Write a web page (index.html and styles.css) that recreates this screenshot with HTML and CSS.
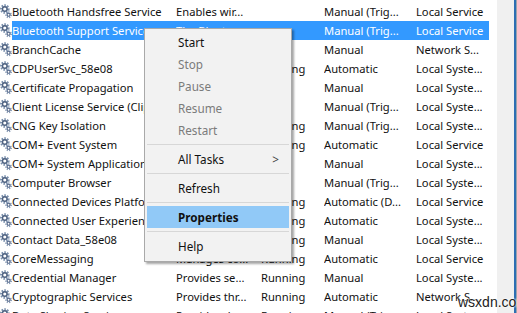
FILE: index.html
```html
<!DOCTYPE html>
<html lang="en">
<head>
  <meta charset="UTF-8" />
  <title>Services</title>
  <link rel="stylesheet" href="styles.css">
</head>
<body>

<svg width="0" height="0" class="defs">
  <symbol id="gear" viewBox="0 0 12 19">
    <circle cx="4.8" cy="7" r="3.3" fill="none" stroke="#7a90ad" stroke-width="3" stroke-dasharray="1.4 1.05"/>
    <circle cx="4.8" cy="7" r="2.3" fill="none" stroke="#4f6280" stroke-width="1.4"/>
    <circle cx="8.6" cy="12.8" r="2.3" fill="none" stroke="#8a9db8" stroke-width="2.3" stroke-dasharray="1 .9"/>
    <circle cx="8.6" cy="12.8" r="1.5" fill="none" stroke="#56698a" stroke-width="1.1"/>
  </symbol>
</svg>

<div class="window">
  <div class="list" id="list"></div>
  <div class="scroll"></div>

  <!-- context menu -->
  <div class="menu">
    <div class="item">Start</div>
    <div class="item off">Stop</div>
    <div class="item off">Pause</div>
    <div class="item off">Resume</div>
    <div class="item off">Restart</div>
    <div class="sep"></div>
    <div class="item sub">All Tasks <span class="arrow">&gt;</span></div>
    <div class="sep"></div>
    <div class="item">Refresh</div>
    <div class="sep"></div>
    <div class="item hot">Properties</div>
    <div class="sep"></div>
    <div class="item">Help</div>
  </div>

  <div class="mark">wsxdn.com</div>
</div>

<script>
  const services = [
    ["Bluetooth Handsfree Service", "Enables wir...", "", "Manual (Trig...", "Local Service"],
    ["Bluetooth Support Service", "The Bluetoo...", "", "Manual (Trig...", "Local Service", true],
    ["BranchCache", "This service ...", "", "Manual", "Network S..."],
    ["CDPUserSvc_58e08", "<Failed to R...", "Running", "Automatic", "Local Syste..."],
    ["Certificate Propagation", "Copies user ...", "", "Manual", "Local Syste..."],
    ["Client License Service (ClipSVC)", "Provides inf...", "", "Manual (Trig...", "Local Syste..."],
    ["CNG Key Isolation", "The CNG ke...", "Running", "Manual (Trig...", "Local Syste..."],
    ["COM+ Event System", "Supports Sy...", "Running", "Automatic", "Local Service"],
    ["COM+ System Application", "Manages th...", "", "Manual", "Local Syste..."],
    ["Computer Browser", "Maintains a...", "", "Manual (Trig...", "Local Syste..."],
    ["Connected Devices Platform Service", "This service ...", "Running", "Automatic (D...", "Local Service"],
    ["Connected User Experiences", "The Connec...", "Running", "Automatic", "Local Syste..."],
    ["Contact Data_58e08", "Indexes con...", "Running", "Manual", "Local Syste..."],
    ["CoreMessaging", "Manages co...", "Running", "Automatic", "Local Service"],
    ["Credential Manager", "Provides se...", "Running", "Manual", "Local Syste..."],
    ["Cryptographic Services", "Provides thr...", "Running", "Automatic", "Network S..."],
    ["Data Sharing Service", "Provides da...", "Running", "Manual (Trig...", "Local Syste..."]
  ];

  const list = document.getElementById('list');
  services.forEach(s => {
    const row = document.createElement('div');
    row.className = 'row' + (s[5] ? ' sel' : '');
    row.innerHTML = `<span class="ic"><svg width="12" height="19"><use href="#gear"/></svg></span>` +
      s.slice(0, 5).map(t => `<span class="cell">${t.replace(/</g, '&lt;')}</span>`).join('');
    list.appendChild(row);
  });
</script>
</body>
</html>
```

FILE: styles.css
```css
* {
  box-sizing: border-box;
  margin: 0;
  padding: 0;
}

body {
  font-family: 'Noto Sans', 'Open Sans', sans-serif;
  font-size: 11.2px;
  color: #111;
  background: #fff;
  overflow: hidden;
}

.defs {
  position: absolute;
}

.window {
  position: relative;
  display: flex;
  width: 517px;
  height: 313px;
  overflow: hidden;
}

.list {
  width: 497px;
  padding-top: 2px;
}

.row {
  display: grid;
  grid-template-columns: 12px 164px 85px 63px 92px 73px;
  height: 19px;
  align-items: stretch;
}

.ic {
  display: flex;
}

.cell {
  white-space: nowrap;
  overflow: hidden;
  line-height: 19px;
}

.row.sel .cell {
  background: #3399ff;
  color: #fff;
}

.scroll {
  flex: 1;
  background: #f0f0f0;
  border-right: 1px solid #9aa3ad;
  box-shadow: inset -2px 0 0 #2d6fb3;
}

.menu {
  position: absolute;
  left: 144px;
  top: 28px;
  width: 148px;
  background: #f2f2f2;
  border: 1px solid #a9a9a9;
  box-shadow: 2px 2px 2px rgba(0, 0, 0, 0.35);
  padding: 2px 2px 4px;
}

.item {
  height: 22px;
  line-height: 22px;
  padding-left: 31px;
  font-size: 11.7px;
  color: #111;
  position: relative;
}

.item.off {
  color: #7b7b7b;
}

.item.hot {
  background: #91c9f7;
  font-weight: 700;
}

.arrow {
  position: absolute;
  right: 10px;
  color: #444;
}

.sep {
  height: 1px;
  background: #d7d7d7;
  margin: 3px 0;
}

.mark {
  position: absolute;
  left: 458px;
  top: 294px;
  font-family: 'Liberation Sans', sans-serif;
  font-size: 14px;
  color: #222;
  text-shadow: 0 0 2px #fff, 0 0 2px #fff;
}
```
